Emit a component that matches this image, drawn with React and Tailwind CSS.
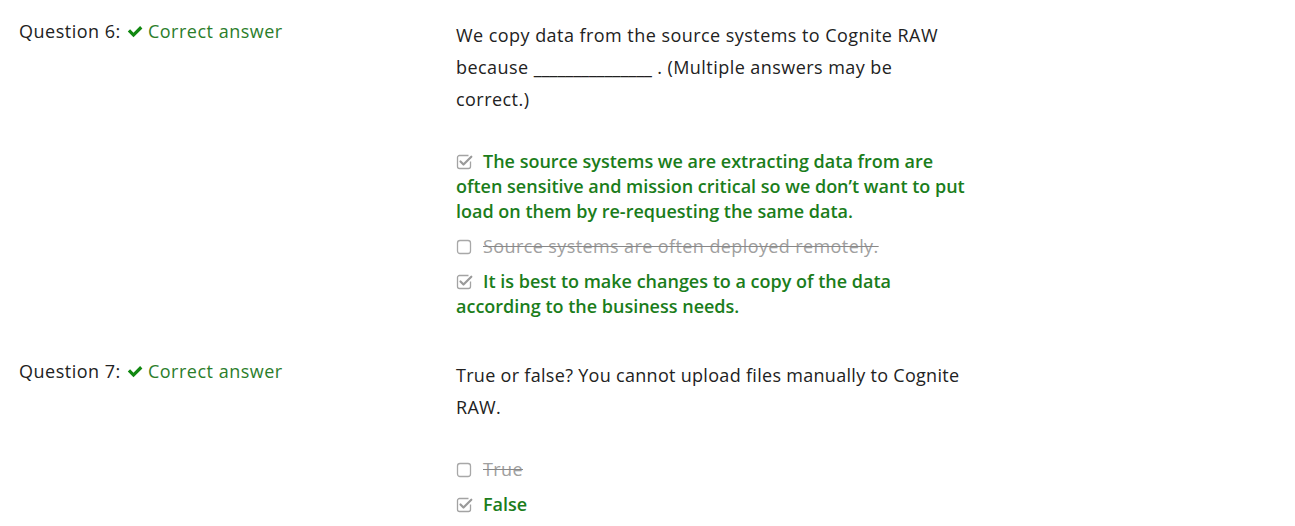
import React from 'react';

function CheckedBox() {
    return (
        <svg width="18" height="18" viewBox="0 0 18 18" className="inline-block align-[-2px] mr-[9px]" fill="none">
            <path d="M12.5 3.5H3.5a2 2 0 0 0-2 2v9a2 2 0 0 0 2 2h9a2 2 0 0 0 2-2v-5" stroke="#a3a3a3" strokeWidth="1.3" />
            <path d="M4.5 9.5l3 3 7.8-7.8" stroke="#9a9a9a" strokeWidth="2.2" strokeLinecap="round" strokeLinejoin="round" />
        </svg>
    );
}

function EmptyBox() {
    return (
        <svg width="18" height="18" viewBox="0 0 18 18" className="inline-block align-[-2px] mr-[9px]" fill="none">
            <rect x="1.5" y="3.5" width="13" height="13" rx="2.5" stroke="#a8a8a8" strokeWidth="1.3" />
        </svg>
    );
}

function Answer({ text, correct }) {
    if (correct) {
        return (
            <div className="leading-[25px] text-[18px] font-semibold text-[#1b7d1b]">
                <CheckedBox />
                {text}
            </div>
        );
    }
    return (
        <div className="leading-[25px] text-[18px] text-[#a0a0a0] tracking-[0.4px]">
            <EmptyBox />
            <span className="line-through decoration-[#888]">{text}</span>
        </div>
    );
}

function Question({ number, children, answers, textClass }) {
    return (
        <div className="flex">
            <div className="w-[437px] shrink-0 text-[18px] leading-[24px] text-[#222] tracking-[0.5px]">
                Question {number}:{' '}
                <span className="text-[#2b7d2b]">
                    <svg width="18" height="16" viewBox="0 0 18 16" className="inline-block align-[-1px] mr-[4px]">
                        <path d="M1.8 8.6l2.3-2.3 3.4 3.4 6.6-6.6 2.3 2.3-8.9 8.9z" fill="#118811" />
                    </svg>
                    Correct answer
                </span>
            </div>
            <div className="w-[512px]">
                <p className={`text-[18px] leading-[32px] text-[#222] ${textClass}`}>{children}</p>
                <div className="mt-[34px] flex flex-col gap-[10px]">
                    {answers.map((a, i) => <Answer key={i} text={a.text} correct={a.correct} />)}
                </div>
            </div>
        </div>
    );
}

export default function App() {
    return (
        <div className="min-h-screen bg-white pl-[19px] pt-[19px] flex flex-col gap-[40px]" style={{ fontFamily: '"Open Sans", sans-serif' }}>
            <Question
                number={6}
                textClass="tracking-[0.45px]"
                answers={[
                    { text: 'The source systems we are extracting data from are often sensitive and mission critical so we don’t want to put load on them by re-requesting the same data.', correct: true },
                    { text: 'Source systems are often deployed remotely.', correct: false },
                    { text: 'It is best to make changes to a copy of the data according to the business needs.', correct: true },
                ]}
            >
                We copy data from the source systems to Cognite RAW because <span className="tracking-normal">_______________</span> . (Multiple answers may be correct.)
            </Question>
            <Question
                number={7}
                textClass="tracking-[0.3px]"
                answers={[
                    { text: 'True', correct: false },
                    { text: 'False', correct: true },
                ]}
            >
                True or false? You cannot upload files manually to Cognite RAW.
            </Question>
        </div>
    );
}
